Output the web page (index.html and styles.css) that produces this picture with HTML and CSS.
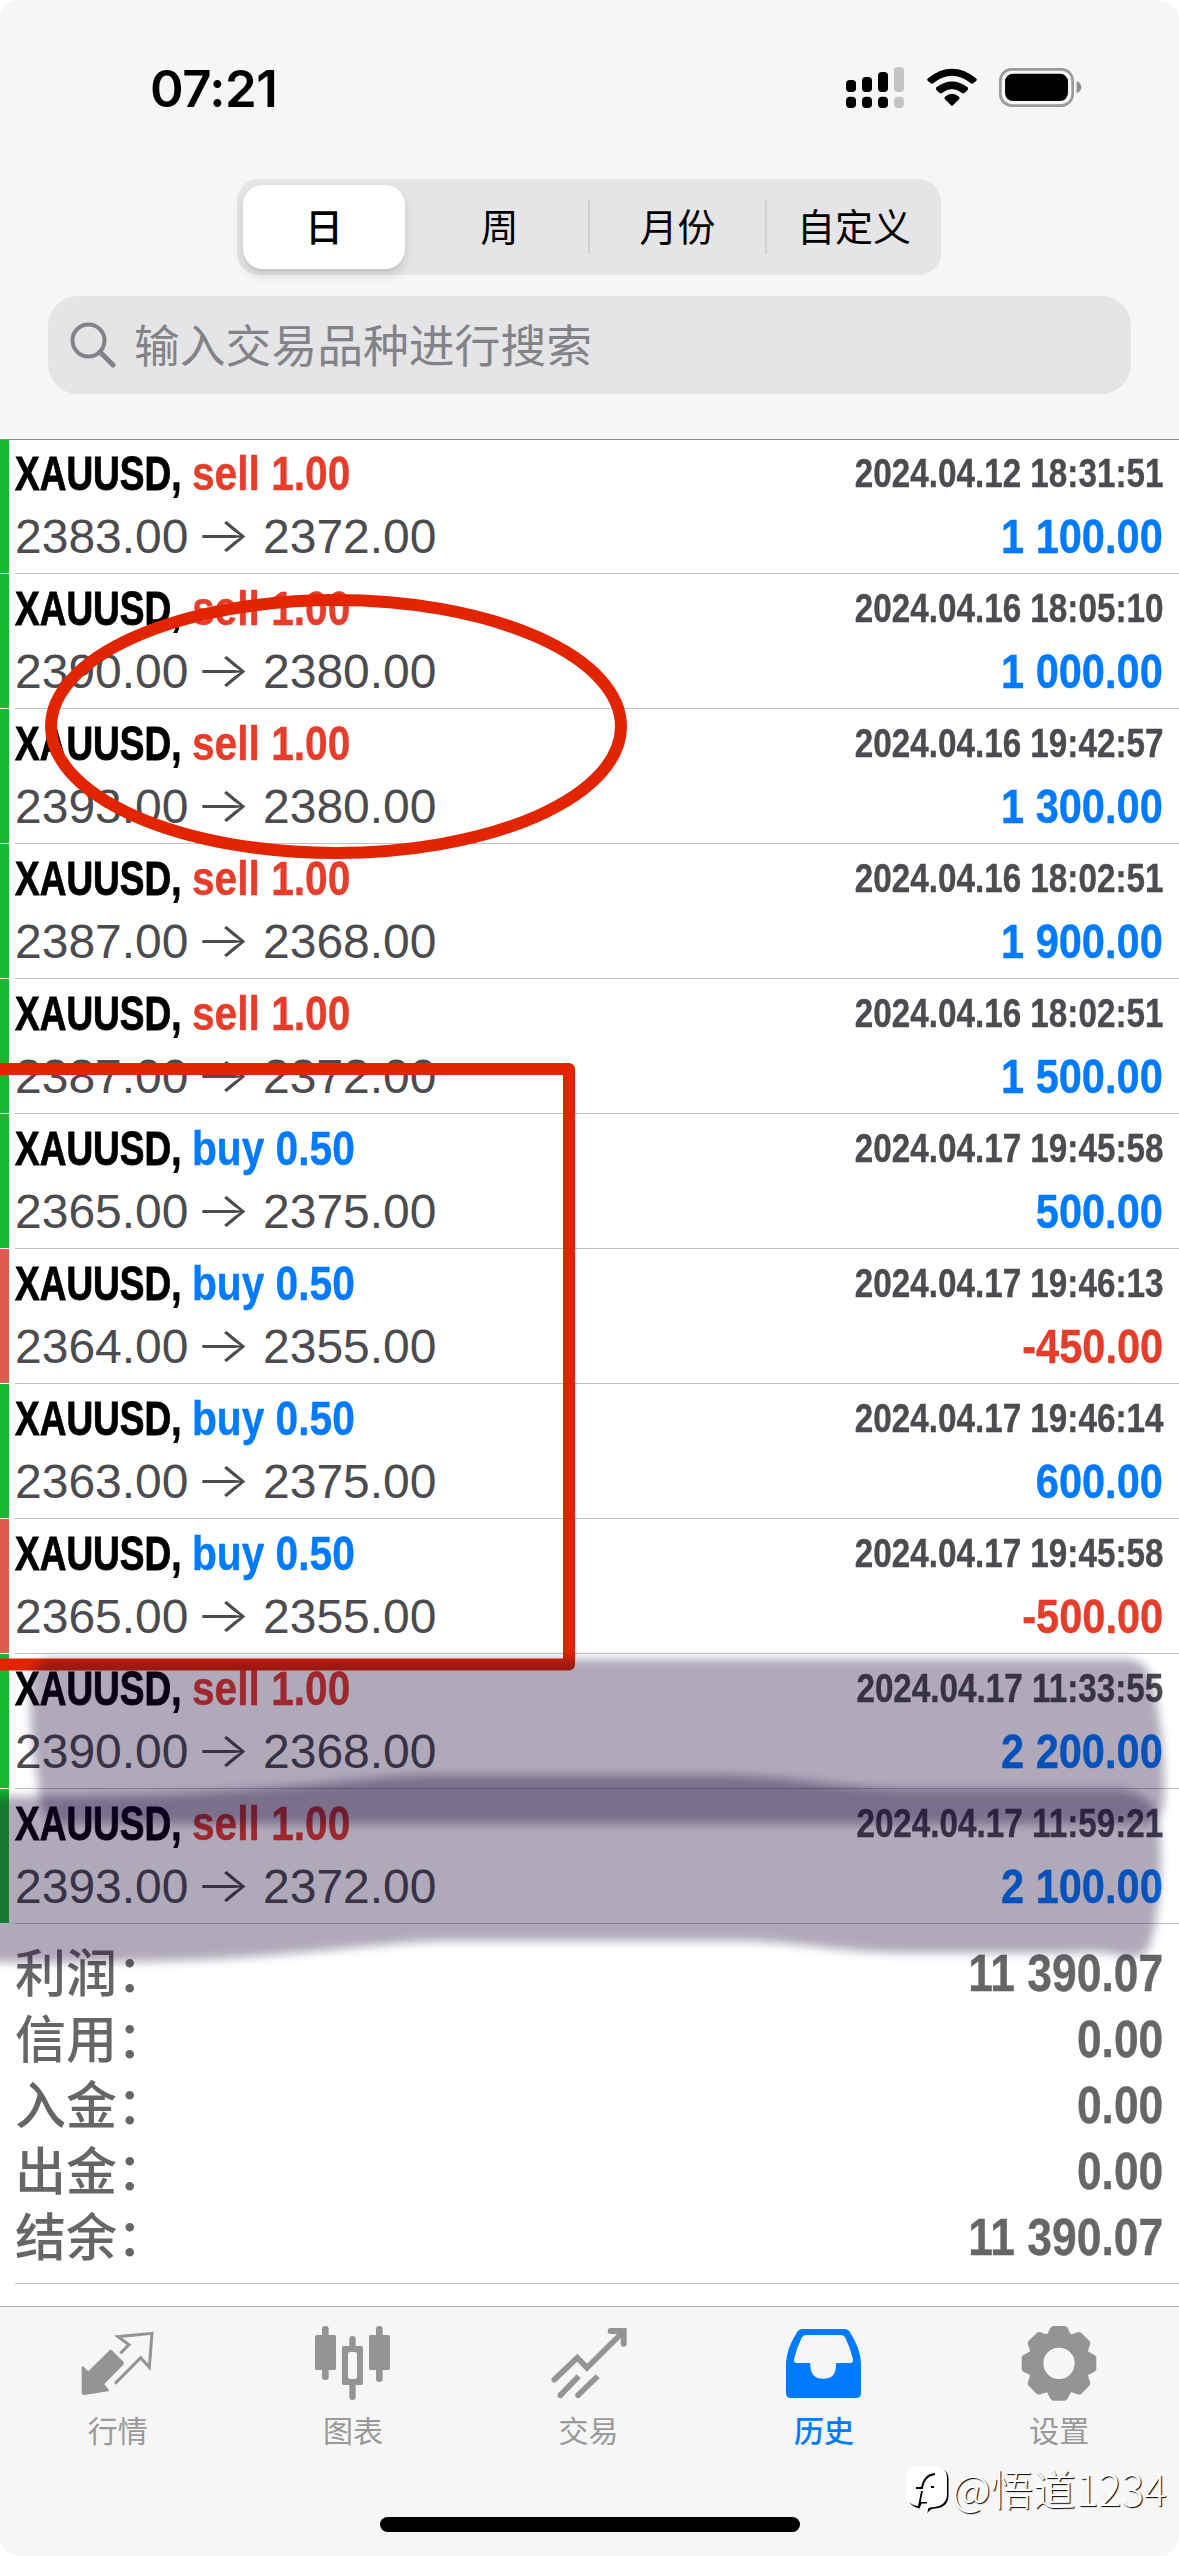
FILE: index.html
```html
<!DOCTYPE html>
<html lang="zh-CN">
<head>
    <meta charset="UTF-8">
    <meta name="viewport" content="width=device-width, initial-scale=1.0">
    <title>历史</title>
    <link rel="stylesheet" href="styles.css">
</head>
<body>
<div class="screen">

    <header class="header">
        <div class="status-bar">
            <span class="time">07:21</span>
            <div class="status-icons">
                <svg class="signal" viewBox="78 78 174 130">
                    <rect x="78" y="120" width="30" height="36" rx="11"/>
                    <rect x="126" y="111" width="30" height="45" rx="11"/>
                    <rect x="174" y="96" width="30" height="60" rx="11"/>
                    <rect x="222" y="81" width="30" height="75" rx="11" fill="#c4c4c4"/>
                    <rect x="78" y="170" width="30" height="34" rx="12"/>
                    <rect x="126" y="170" width="30" height="34" rx="12"/>
                    <rect x="174" y="170" width="30" height="34" rx="12"/>
                    <rect x="222" y="170" width="30" height="34" rx="12" fill="#c4c4c4"/>
                </svg>
                <svg class="wifi" viewBox="320 78 150 130">
                    <path d="M323 115 Q395 58 467 115 Q472 119 467 123 L459 130 Q455 133 450 129 Q395 86 340 129 Q335 133 331 130 L323 123 Q318 119 323 115Z"/>
                    <path d="M348 142 Q395 107 442 142 Q445 146 442 150 L432 159 Q428 162 424 158 Q395 136 366 158 Q362 162 358 159 L348 150 Q345 146 348 142Z"/>
                    <path d="M374 170 Q395 153 416 170 Q420 174 416 178 L398 196 Q395 199 392 196 L374 178 Q370 174 374 170Z"/>
                </svg>
                <svg class="battery" viewBox="537 78 248 130">
                    <rect x="541" y="88" width="217" height="109" rx="34" fill="none" stroke="#9a9a9a" stroke-width="8"/>
                    <rect x="555" y="101" width="189" height="82" rx="24"/>
                    <path d="M770 124 Q784 130 784 142 Q784 154 770 160Z" fill="#8e8e8e"/>
                </svg>
            </div>
        </div>

        <div class="segments">
            <button class="segment active">日</button>
            <button class="segment">周</button>
            <button class="segment divided">月份</button>
            <button class="segment divided">自定义</button>
        </div>

        <div class="search">
            <svg class="search-icon" viewBox="0 0 46 46">
                <circle cx="18.5" cy="18.5" r="16" fill="none" stroke="#838387" stroke-width="4"/>
                <path d="M30 30 L43 43" stroke="#838387" stroke-width="5" stroke-linecap="round"/>
            </svg>
            <span>输入交易品种进行搜索</span>
        </div>
    </header>

    <main class="deals">
        <div class="deal">
            <div class="deal-body">
                <div class="line"><b class="symbol">XAUUSD,</b><b class="side sell">sell 1.00</b><b class="date">2024.04.12 18:31:51</b></div>
                <div class="line"><span class="price">2383.00</span><span class="arrow">→</span><span class="price">2372.00</span><b class="profit">1 100.00</b></div>
            </div>
        </div>
        <div class="deal">
            <div class="deal-body">
                <div class="line"><b class="symbol">XAUUSD,</b><b class="side sell">sell 1.00</b><b class="date">2024.04.16 18:05:10</b></div>
                <div class="line"><span class="price">2390.00</span><span class="arrow">→</span><span class="price">2380.00</span><b class="profit">1 000.00</b></div>
            </div>
        </div>
        <div class="deal">
            <div class="deal-body">
                <div class="line"><b class="symbol">XAUUSD,</b><b class="side sell">sell 1.00</b><b class="date">2024.04.16 19:42:57</b></div>
                <div class="line"><span class="price">2393.00</span><span class="arrow">→</span><span class="price">2380.00</span><b class="profit">1 300.00</b></div>
            </div>
        </div>
        <div class="deal">
            <div class="deal-body">
                <div class="line"><b class="symbol">XAUUSD,</b><b class="side sell">sell 1.00</b><b class="date">2024.04.16 18:02:51</b></div>
                <div class="line"><span class="price">2387.00</span><span class="arrow">→</span><span class="price">2368.00</span><b class="profit">1 900.00</b></div>
            </div>
        </div>
        <div class="deal">
            <div class="deal-body">
                <div class="line"><b class="symbol">XAUUSD,</b><b class="side sell">sell 1.00</b><b class="date">2024.04.16 18:02:51</b></div>
                <div class="line"><span class="price">2387.00</span><span class="arrow">→</span><span class="price">2372.00</span><b class="profit">1 500.00</b></div>
            </div>
        </div>
        <div class="deal">
            <div class="deal-body">
                <div class="line"><b class="symbol">XAUUSD,</b><b class="side buy">buy 0.50</b><b class="date">2024.04.17 19:45:58</b></div>
                <div class="line"><span class="price">2365.00</span><span class="arrow">→</span><span class="price">2375.00</span><b class="profit">500.00</b></div>
            </div>
        </div>
        <div class="deal loss">
            <div class="deal-body">
                <div class="line"><b class="symbol">XAUUSD,</b><b class="side buy">buy 0.50</b><b class="date">2024.04.17 19:46:13</b></div>
                <div class="line"><span class="price">2364.00</span><span class="arrow">→</span><span class="price">2355.00</span><b class="profit">-450.00</b></div>
            </div>
        </div>
        <div class="deal">
            <div class="deal-body">
                <div class="line"><b class="symbol">XAUUSD,</b><b class="side buy">buy 0.50</b><b class="date">2024.04.17 19:46:14</b></div>
                <div class="line"><span class="price">2363.00</span><span class="arrow">→</span><span class="price">2375.00</span><b class="profit">600.00</b></div>
            </div>
        </div>
        <div class="deal loss">
            <div class="deal-body">
                <div class="line"><b class="symbol">XAUUSD,</b><b class="side buy">buy 0.50</b><b class="date">2024.04.17 19:45:58</b></div>
                <div class="line"><span class="price">2365.00</span><span class="arrow">→</span><span class="price">2355.00</span><b class="profit">-500.00</b></div>
            </div>
        </div>
        <div class="deal">
            <div class="deal-body">
                <div class="line"><b class="symbol">XAUUSD,</b><b class="side sell">sell 1.00</b><b class="date">2024.04.17 11:33:55</b></div>
                <div class="line"><span class="price">2390.00</span><span class="arrow">→</span><span class="price">2368.00</span><b class="profit">2 200.00</b></div>
            </div>
        </div>
        <div class="deal">
            <div class="deal-body">
                <div class="line"><b class="symbol">XAUUSD,</b><b class="side sell">sell 1.00</b><b class="date">2024.04.17 11:59:21</b></div>
                <div class="line"><span class="price">2393.00</span><span class="arrow">→</span><span class="price">2372.00</span><b class="profit">2 100.00</b></div>
            </div>
        </div>
    </main>

    <section class="summary">
        <div class="total"><span>利润：</span><b>11 390.07</b></div>
        <div class="total"><span>信用：</span><b>0.00</b></div>
        <div class="total"><span>入金：</span><b>0.00</b></div>
        <div class="total"><span>出金：</span><b>0.00</b></div>
        <div class="total"><span>结余：</span><b>11 390.07</b></div>
    </section>

    <nav class="tabs">
        <a class="tab">
            <svg viewBox="53 36 240 240">
                <path d="M180 130 L206 104 L173 80 L275 70 L267 172 L241 143 L164 221" fill="none" stroke="#949494" stroke-width="9"/>
                <path d="M146 122 Q151 117 156 122 L190 156 Q192 160 189 164 L132 222 L146 240 L144 244 L72 255 Q64 256 64 247 L64 169 L68 169 L84 184Z" fill="#949494"/>
            </svg>
            <span>行情</span>
        </a>
        <a class="tab">
            <svg viewBox="759 36 240 240">
                <g fill="#949494">
                    <rect x="765" y="75" width="63" height="105" rx="5"/>
                    <rect x="786" y="48" width="20" height="162" rx="9"/>
                    <rect x="927" y="75" width="63" height="105" rx="5"/>
                    <rect x="948" y="48" width="20" height="168" rx="9"/>
                    <rect x="846" y="108" width="63" height="117" rx="5"/>
                    <rect x="868" y="78" width="19" height="192" rx="9"/>
                </g>
                <rect x="864" y="126" width="27" height="81" rx="7" fill="#f6f6f6"/>
            </svg>
            <span>图表</span>
        </a>
        <a class="tab">
            <svg viewBox="55 36 240 240">
                <g fill="none" stroke="#949494" stroke-width="17" stroke-linecap="round">
                    <path d="M71 209 L140 143 L169 173 L274 69"/>
                    <path d="M89 256 L144 199" stroke-linecap="butt"/>
                    <path d="M142 256 L201 199" stroke-linecap="butt"/>
                    <path d="M89 256 h.1 M142 256 h.1"/>
                    <path d="M240 63 H279 V101" stroke-width="18"/>
                </g>
            </svg>
            <span>交易</span>
        </a>
        <a class="tab current">
            <svg viewBox="762 36 240 240">
                <path fill="#007aff" fill-rule="evenodd" d="M817 57 H944 Q954 57 960 67 Q992 118 993 160 V249 Q993 264 978 264 H783 Q768 264 768 249 V160 Q769 118 801 67 Q807 57 817 57Z M828 75 Q819 75 815 83 Q800 113 792 148 Q790 159 801 159 H841 V167 Q843 206 880 206 Q917 206 918 167 V159 H960 Q971 159 969 148 Q961 113 946 83 Q942 75 933 75Z"/>
            </svg>
            <span>历史</span>
        </a>
        <a class="tab">
            <svg viewBox="-120 -124 240 240">
                <g fill="#949494" stroke="#949494" stroke-width="10" stroke-linejoin="round">
                    <path id="tooth" d="M-17 -107 H17 Q22 -106 25 -96 L34 -80 V-50 H-34 V-80 L-25 -96 Q-22 -106 -17 -107Z"/>
                    <use href="#tooth" transform="rotate(45)"/>
                    <use href="#tooth" transform="rotate(90)"/>
                    <use href="#tooth" transform="rotate(135)"/>
                    <use href="#tooth" transform="rotate(180)"/>
                    <use href="#tooth" transform="rotate(225)"/>
                    <use href="#tooth" transform="rotate(270)"/>
                    <use href="#tooth" transform="rotate(315)"/>
                </g>
                <circle r="65" fill="none" stroke="#949494" stroke-width="36"/>
                <circle r="47" fill="#f6f6f6"/>
            </svg>
            <span>设置</span>
        </a>
    </nav>
    <div class="home-indicator"></div>

    <!-- hand-drawn marks over the list -->
    <svg class="marks" viewBox="0 0 1179 2556">
        <defs>
            <filter id="soft" x="-10%" y="-10%" width="120%" height="120%" color-interpolation-filters="sRGB">
                <feGaussianBlur stdDeviation="5"/>
            </filter>
        </defs>
        <ellipse cx="336" cy="726.5" rx="285" ry="126.5" fill="none" stroke="#e22400" stroke-width="12"/>
        <path d="M-20 1069 H569 V1664.5 H-20" fill="none" stroke="#e22400" stroke-width="12" stroke-linejoin="round"/>
        <g fill="#140434" fill-opacity="0.34" filter="url(#soft)">
            <path d="M52 1659 H1125 Q1145 1659 1152 1680 Q1166 1740 1164 1800 Q1162 1824 1135 1824 H60 Q38 1822 38 1780 Q28 1730 31 1680 Q34 1659 52 1659Z"/>
            <path d="M-20 1796 C120 1797 200 1793 280 1787 C360 1780 390 1775 450 1775 H722 C800 1777 830 1786 900 1789 H1120 Q1150 1793 1158 1815 Q1166 1890 1150 1945 Q1142 1962 1118 1955 Q1100 1950 1070 1953 H902 C840 1952 800 1942 740 1941 H440 C370 1944 300 1955 200 1960 Q80 1964 -20 1962Z"/>
        </g>
    </svg>

    <div class="watermark">
        <svg viewBox="0 0 45 50">
            <path transform="translate(1.5 1.5)" d="M12 0 H30 Q41 1 41 12 V29 Q40 40 28 41 Q22 41 20 46 L21 36 H14 L12 41 Q0 38 0 28 V12 Q1 1 12 0Z" fill="#000"/>
            <path d="M12 0 H30 Q41 1 41 12 V29 Q40 40 28 41 Q22 41 20 45 L21 36 H14 L12 40 Q0 38 0 28 V12 Q1 1 12 0Z" fill="#fff"/>
            <path d="M13 40 L16 25 M10 22 H16 Q18 9 29 8 M25 21 h3" fill="none" stroke="#000" stroke-width="1.8"/>
        </svg>
        <span>@悟道1234</span>
    </div>
</div>
</body>
</html>
```
FILE: styles.css
```css
body {
    margin: 0;
    background-color: #fff;
    font-family: "Liberation Sans", "Noto Sans CJK SC", sans-serif;
}

.screen {
    position: relative;
    display: flex;
    flex-direction: column;
    width: 1179px;
    height: 2556px;
    overflow: hidden;
    border-radius: 20px;
    background-color: #fff;
}

/* Header */
.header {
    box-sizing: border-box;
    height: 440px;
    background-color: #f6f6f6;
    border-bottom: 1px solid #8a8a8a;
}

.status-bar {
    display: flex;
    justify-content: space-between;
    align-items: center;
    height: 176px;
    padding: 0 97px 0 150px;
    box-sizing: border-box;
}

.time {
    font-family: Inter, sans-serif;
    font-size: 51px;
    font-weight: 600;
    letter-spacing: -0.5px;
}

.status-icons {
    display: flex;
    gap: 22.5px;
}

.status-icons svg {
    height: 43.3px;
}

.signal { width: 58px; }
.wifi { width: 50px; }
.battery { width: 82.7px; }

.segments {
    display: grid;
    grid-template-columns: 174px 177px 177px 176px;
    box-sizing: border-box;
    width: 704px;
    height: 96px;
    margin: 3px 0 0 237px;
    border-radius: 22px;
    background-color: #e5e5e7;
}

.segment {
    display: flex;
    align-items: center;
    justify-content: center;
    padding: 0 0 5px;
    border: none;
    background: none;
    color: #000;
    font-family: "Noto Sans CJK SC", sans-serif;
    font-size: 38px;
}

.segment.active {
    width: 162px;
    height: 84px;
    margin: 6px;
    border-radius: 20px;
    background-color: #fff;
    font-weight: 500;
    box-shadow: 0 6px 12px rgba(0, 0, 0, 0.12), 0 3px 2px rgba(0, 0, 0, 0.04);
}

.segment.divided {
    height: 54px;
    margin-top: 21px;
    border-left: 2px solid #d0d0d2;
}

.search {
    display: flex;
    align-items: center;
    gap: 18px;
    box-sizing: border-box;
    width: 1083px;
    height: 98px;
    margin: 21px 0 0 48px;
    padding-left: 22px;
    border-radius: 30px;
    background-color: #e5e5e7;
    color: #838387;
    font-family: "Noto Sans CJK SC", sans-serif;
    font-size: 45.8px;
}

.search span {
    padding-bottom: 5px;
}

.search-icon {
    width: 46px;
    height: 46px;
}

/* Deals */
.deal {
    display: flex;
    height: 135px;
    color: #4b4b50;
}

.deal:first-child {
    height: 134px;
}

.deal::before {
    content: "";
    width: 9px;
    margin: 0 6px 1px 0;
    background-color: #15b82f;
}

.deal.loss::before {
    background-color: #de5b50;
}

.deal-body {
    display: flex;
    flex-direction: column;
    justify-content: flex-end;
    flex: 1;
    padding: 0 16px 5px 0;
    border-bottom: 1px solid #c0c0c2;
}

.line {
    display: flex;
    height: 63px;
    line-height: 63px;
    font-size: 49px;
    white-space: nowrap;
}

/* condensed faces */
.symbol {
    width: 176.5px;
    color: #000;
    transform: scaleX(0.755);
    transform-origin: left;
    -webkit-text-stroke: 0.9px;
}

.side {
    transform: scaleX(0.83);
    transform-origin: left;
    -webkit-text-stroke: 0.4px;
}

.sell { color: #e63c2a; }
.buy { color: #007aff; }

.date {
    margin-left: auto;
    font-size: 40px;
    transform: scaleX(0.831);
    transform-origin: right;
    -webkit-text-stroke: 0.4px;
}

.price {
    width: 186px;
    font-size: 48px;
}

.arrow {
    width: 62px;
    font-family: Inter, sans-serif;
    font-weight: 300;
    text-align: center;
    transform: translate(-9px, -2px) scaleX(1.2);
}

.profit {
    margin-left: auto;
    color: #007aff;
    transform: scaleX(0.848);
    transform-origin: right;
    -webkit-text-stroke: 0.4px;
}

.loss .profit {
    color: #e63c2a;
}

/* Totals */
.summary {
    box-sizing: border-box;
    height: 360px;
    margin-left: 15px;
    padding: 17px 16px 0 0;
    border-bottom: 1px solid #c0c0c2;
}

.total {
    display: flex;
    justify-content: space-between;
    height: 66px;
    line-height: 66px;
    color: #666;
    font-size: 51px;
}

.total span {
    margin-top: -4px;
    font-family: "Noto Sans CJK SC", sans-serif;
    font-weight: 500;
}

.total b {
    transform: scaleX(0.87);
    transform-origin: right;
    -webkit-text-stroke: 0.4px;
}

/* Tab bar */
.tabs {
    display: flex;
    box-sizing: border-box;
    height: 211px;
    margin-top: 22px;
    padding: 15px 2px 0 0;
    border-top: 1px solid #acacac;
    background-color: #f6f6f6;
}

.tab {
    display: flex;
    flex-direction: column;
    align-items: center;
    flex: 1;
    color: #999;
    font-family: "Noto Sans CJK SC", sans-serif;
    font-size: 30px;
}

.tab svg {
    width: 80px;
    height: 80px;
}

.tab span {
    margin-top: 5px;
    line-height: 44px;
}

.tab.current {
    color: #007aff;
}

.tab.current span {
    font-weight: 500;
}

.home-indicator {
    flex: 1;
    background: #f6f6f6;
}

.home-indicator::before {
    content: "";
    display: block;
    width: 420px;
    height: 15px;
    margin: 0 auto;
    border-radius: 8px;
    background-color: #000;
}

.marks {
    position: absolute;
    top: 0;
    left: 0;
    width: 1179px;
    height: 2556px;
    pointer-events: none;
}

.watermark {
    position: absolute;
    top: 2456px;
    left: 906px;
    display: flex;
    align-items: center;
    gap: 1px;
    height: 62px;
    color: #fff;
    font-family: "Noto Sans CJK SC", sans-serif;
    font-size: 42.5px;
    font-weight: 300;
    text-shadow: 1px 1px 1px #000;
}

.watermark svg {
    width: 45px;
    height: 50px;
    margin-top: 8px;
}
```
